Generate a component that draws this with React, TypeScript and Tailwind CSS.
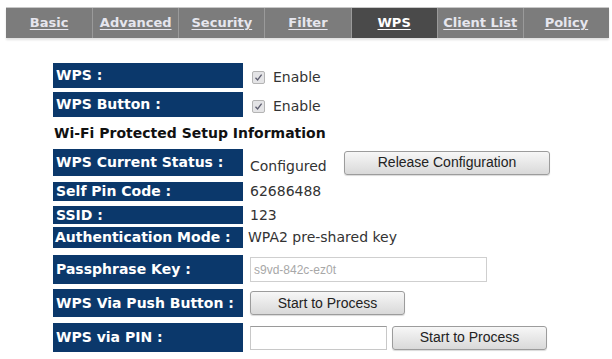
import React from 'react'

const tabs = ['Basic', 'Advanced', 'Security', 'Filter', 'WPS', 'Client List', 'Policy']

const Check = () => (
  <span className="w-[13px] h-[13px] border border-[#b4b4b4] bg-[#e4e4e6] rounded-[2px] flex items-center justify-center">
    <svg width="9" height="9" viewBox="0 0 9 9">
      <path d="M1.5 4.8 L3.6 7 L7.6 1.6" fill="none" stroke="#5e5e70" strokeWidth="1.3" />
    </svg>
  </span>
)

const Btn = ({ text, w }: { text: string; w: string }) => (
  <button
    className={`${w} h-[24px] border border-[#9c9c9c] rounded-[3px] bg-gradient-to-b from-[#f7f7f7] to-[#d9d9d9] text-[14px] text-[#222] shadow-[0_1px_1px_rgba(0,0,0,0.15)]`}
    style={{ fontFamily: '"Liberation Sans", Arial, sans-serif' }}
  >
    {text}
  </button>
)

export default function App() {
  return (
    <div className="w-[612px] h-[359px] bg-white overflow-hidden" style={{ fontFamily: '"DejaVu Sans", Verdana, sans-serif' }}>
      <div className="pt-[7px] pl-[6px]">
        <div className="w-[603px] h-[31px] grid grid-cols-7 bg-[#7c7c7c] border-t border-[#c8c8c8] shadow-[0_2px_2px_rgba(0,0,0,0.12)]">
          {tabs.map((t, i) => (
            <div
              key={t}
              className={`flex items-center justify-center text-[13px] font-bold underline underline-offset-2 ${
                t === 'WPS' ? 'bg-[#4a4a4a] text-white' : 'text-[#e6e6ee]'
              } ${i > 0 ? 'border-l border-[#9a9a9a]' : ''}`}
            >
              {t}
            </div>
          ))}
        </div>
      </div>

      <div className="pl-[53px] pt-[25px] text-[14px] text-[#333]">
        <div className="flex h-[25px] items-center">
          <div className="w-[190px] h-full bg-[#0b386b] flex items-center pl-[3px] text-white font-bold">WPS :</div>
          <div className="ml-[9px] mt-[3px] flex items-center gap-[8px]"><Check />Enable</div>
        </div>
        <div className="flex h-[25px] items-center mt-[4px]">
          <div className="w-[190px] h-full bg-[#0b386b] flex items-center pl-[3px] text-white font-bold">WPS Button :</div>
          <div className="ml-[9px] mt-[3px] flex items-center gap-[8px]"><Check />Enable</div>
        </div>
        <div className="h-[32px] flex items-center font-bold text-[#111] pl-[1px]">Wi-Fi Protected Setup Information</div>

        <div className="flex h-[27px] items-center">
          <div className="w-[190px] h-full bg-[#0b386b] flex items-center pl-[3px] text-white font-bold">WPS Current Status :</div>
          <div className="ml-[7px] mt-[8px] w-[94px]">Configured</div>
          <Btn text="Release Configuration" w="w-[206px]" />
        </div>
        <div className="flex h-[19px] items-center mt-[6px]">
          <div className="w-[190px] h-full bg-[#0b386b] flex items-center pl-[3px] text-white font-bold">Self Pin Code :</div>
          <div className="ml-[7px]">62686488</div>
        </div>
        <div className="flex h-[18px] items-center mt-[5px]">
          <div className="w-[190px] h-full bg-[#0b386b] flex items-center pl-[3px] text-white font-bold">SSID :</div>
          <div className="ml-[7px]">123</div>
        </div>
        <div className="flex h-[21px] items-center mt-[3px]">
          <div className="w-[190px] h-full bg-[#0b386b] flex items-center pl-[2px] text-white font-bold whitespace-nowrap">Authentication Mode :</div>
          <div className="ml-[5px]">WPA2 pre-shared key</div>
        </div>
        <div className="flex h-[29px] items-center mt-[7px]">
          <div className="w-[190px] h-full bg-[#0b386b] flex items-center pl-[3px] text-white font-bold">Passphrase Key :</div>
          <div
            className="ml-[7px] w-[237px] h-[25px] border border-[#cfcfcf] bg-white flex items-center pl-[3px] text-[12px] text-[#a8a8a8]"
            style={{ fontFamily: '"Liberation Sans", Arial, sans-serif' }}
          >
            s9vd-842c-ez0t
          </div>
        </div>
        <div className="flex h-[28px] items-center mt-[5px]">
          <div className="w-[190px] h-full bg-[#0b386b] flex items-center pl-[3px] text-white font-bold">WPS Via Push Button :</div>
          <div className="ml-[7px]"><Btn text="Start to Process" w="w-[155px]" /></div>
        </div>
        <div className="flex h-[29px] items-center mt-[6px]">
          <div className="w-[190px] h-full bg-[#0b386b] flex items-center pl-[3px] text-white font-bold">WPS via PIN :</div>
          <div className="ml-[7px] w-[137px] h-[24px] border border-[#c8c8c8] border-t-[#9a9a9a] bg-white" />
          <div className="ml-[5px]"><Btn text="Start to Process" w="w-[155px]" /></div>
        </div>
      </div>
    </div>
  )
}
